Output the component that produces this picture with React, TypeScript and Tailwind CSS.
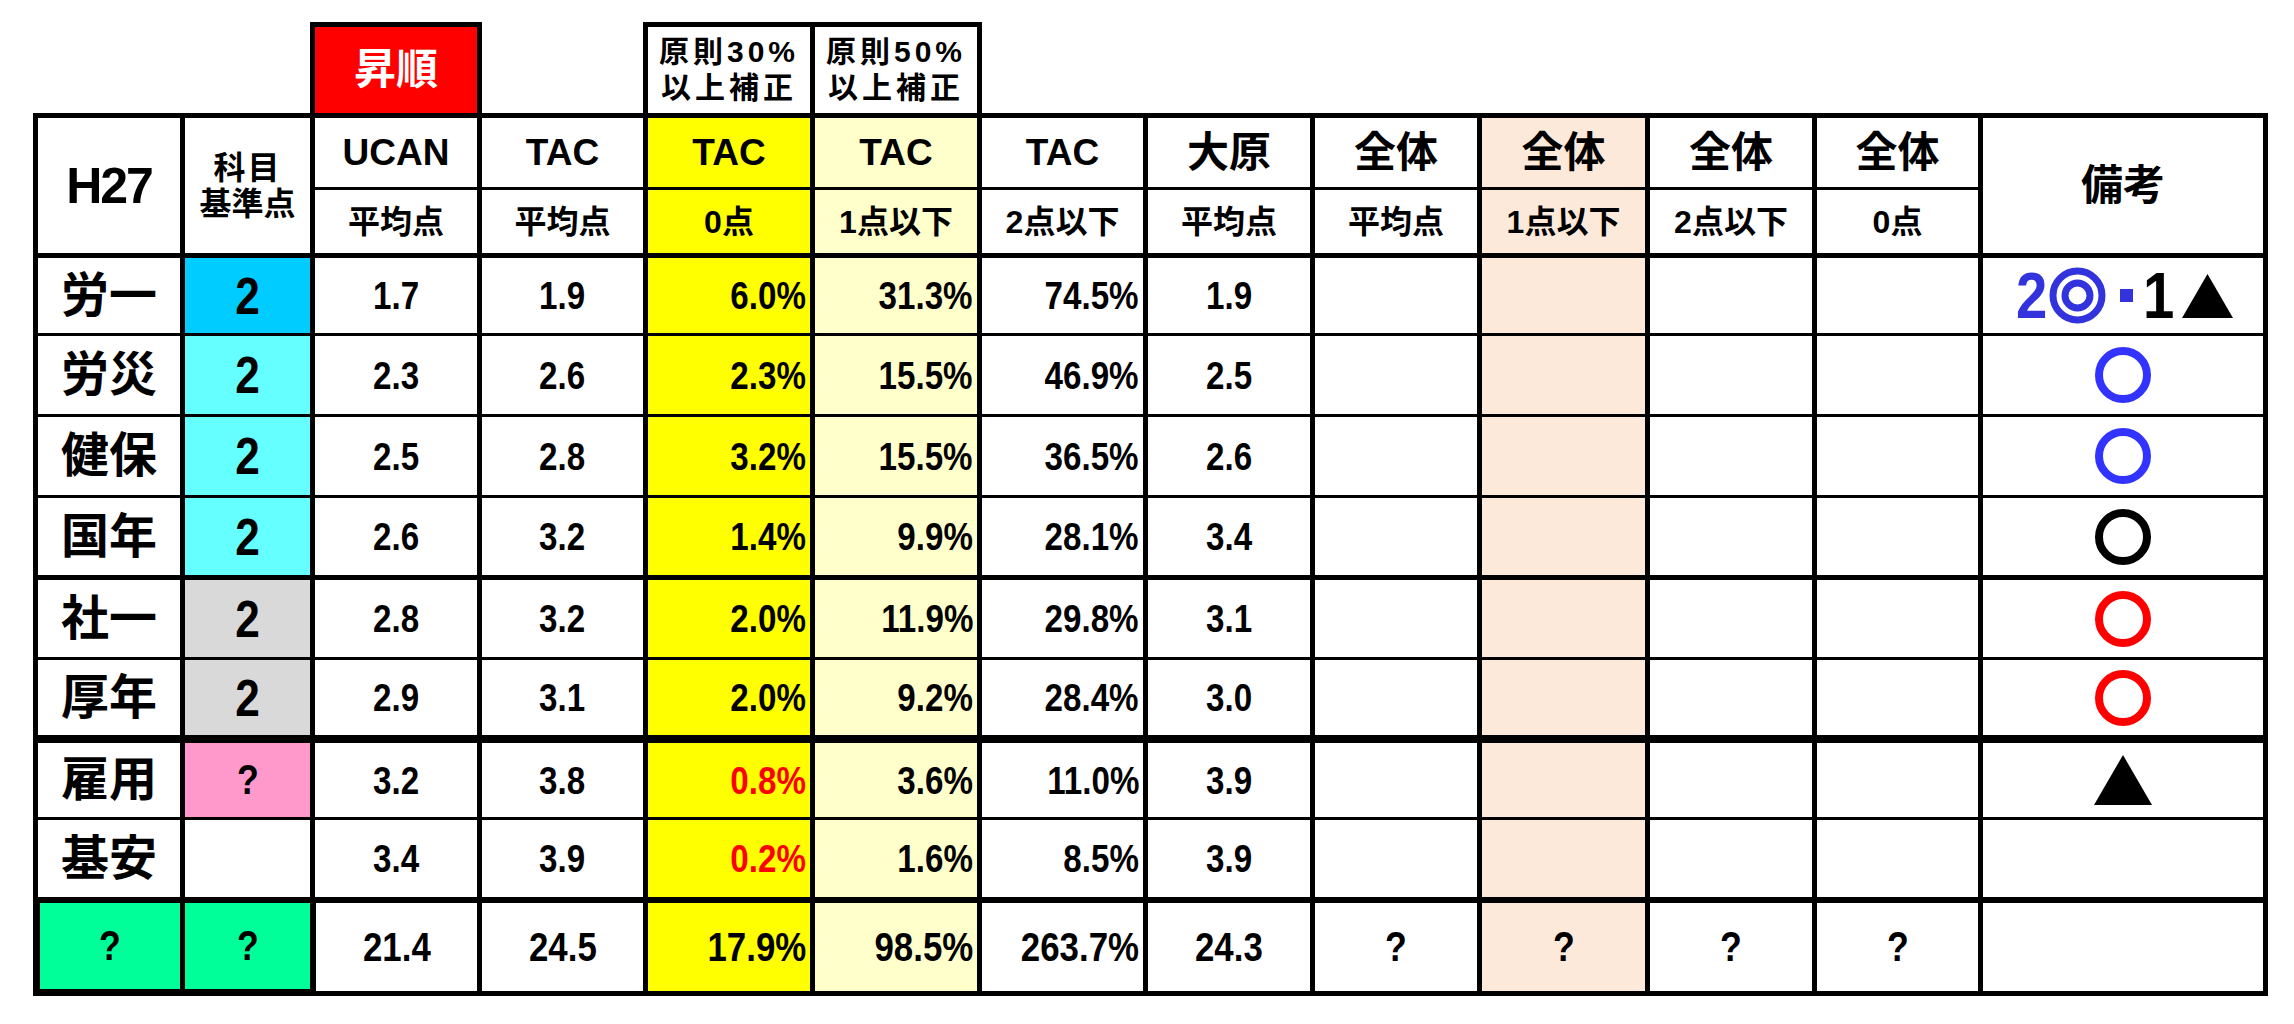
import React from "react";

type Row = {
  label: string;
  base: string;
  baseBg: string;
  ucan: string;
  tac: string;
  z: string;
  zr: boolean;
  o: string;
  t: string;
  oh: string;
  mark: string;
  top: string;
};

const rows: Row[] = [
  { label: "労一", base: "2", baseBg: "bg-[#00ccff]", ucan: "1.7", tac: "1.9", z: "6.0%", zr: false, o: "31.3%", t: "74.5%", oh: "1.9", mark: "combo", top: "border-t-[5px]" },
  { label: "労災", base: "2", baseBg: "bg-[#66ffff]", ucan: "2.3", tac: "2.6", z: "2.3%", zr: false, o: "15.5%", t: "46.9%", oh: "2.5", mark: "blue", top: "border-t-[3px]" },
  { label: "健保", base: "2", baseBg: "bg-[#66ffff]", ucan: "2.5", tac: "2.8", z: "3.2%", zr: false, o: "15.5%", t: "36.5%", oh: "2.6", mark: "blue", top: "border-t-[3px]" },
  { label: "国年", base: "2", baseBg: "bg-[#66ffff]", ucan: "2.6", tac: "3.2", z: "1.4%", zr: false, o: "9.9%", t: "28.1%", oh: "3.4", mark: "black", top: "border-t-[3px]" },
  { label: "社一", base: "2", baseBg: "bg-[#d9d9d9]", ucan: "2.8", tac: "3.2", z: "2.0%", zr: false, o: "11.9%", t: "29.8%", oh: "3.1", mark: "red", top: "border-t-[5px]" },
  { label: "厚年", base: "2", baseBg: "bg-[#d9d9d9]", ucan: "2.9", tac: "3.1", z: "2.0%", zr: false, o: "9.2%", t: "28.4%", oh: "3.0", mark: "red", top: "border-t-[3px]" },
  { label: "雇用", base: "?", baseBg: "bg-[#ff99cc]", ucan: "3.2", tac: "3.8", z: "0.8%", zr: true, o: "3.6%", t: "11.0%", oh: "3.9", mark: "tri", top: "border-t-[8px]" },
  { label: "基安", base: "", baseBg: "bg-white", ucan: "3.4", tac: "3.9", z: "0.2%", zr: true, o: "1.6%", t: "8.5%", oh: "3.9", mark: "", top: "border-t-[3px]" },
];

function C({ top, className = "", children }: { top: string; className?: string; children?: React.ReactNode }) {
  return (
    <div className={`flex items-center border-l-[5px] border-black leading-none ${top} ${className}`}>
      {children}
    </div>
  );
}

function N({ children, right = false }: { children?: React.ReactNode; right?: boolean }) {
  return (
    <span className={`inline-block scale-x-[0.85] ${right ? "origin-right" : "origin-center"}`}>{children}</span>
  );
}

function Ring({ color }: { color: string }) {
  return (
    <svg width="56" height="56" viewBox="0 0 56 56">
      <circle cx="28" cy="28" r="24" fill="none" stroke={color} strokeWidth="8" />
    </svg>
  );
}

function Mark({ kind }: { kind: string }) {
  if (kind === "combo") {
    return (
      <div className="flex items-center">
        <span className="inline-block w-[32px] scale-x-[0.88] text-center text-[64px] leading-none text-[#3333dd]">2</span>
        <svg className="ml-[3px]" width="57" height="57" viewBox="0 0 57 57">
          <circle cx="28.5" cy="28.5" r="24.5" fill="none" stroke="#3333dd" strokeWidth="7" />
          <circle cx="28.5" cy="28.5" r="12.5" fill="none" stroke="#3333dd" strokeWidth="7" />
        </svg>
        <span className="ml-[14px] h-[13px] w-[13px] bg-[#3333dd]" />
        <span className="ml-[8px] inline-block w-[32px] scale-x-[0.88] text-center text-[64px] leading-none text-black">1</span>
        <svg className="ml-[9px]" width="51" height="44" viewBox="0 0 51 44">
          <polygon points="25.5,0 51,44 0,44" fill="#000" />
        </svg>
      </div>
    );
  }
  if (kind === "blue") return <Ring color="#3333ff" />;
  if (kind === "black") return <Ring color="#000000" />;
  if (kind === "red") return <Ring color="#ff0000" />;
  if (kind === "tri") {
    return (
      <svg width="58" height="50" viewBox="0 0 58 50">
        <polygon points="29,0 58,50 0,50" fill="#000" />
      </svg>
    );
  }
  return null;
}

const num = "justify-center text-[39px]";
const pct = "justify-end pr-[4px] text-[39px]";
const tnum = "justify-center border-b-[5px] text-[41px]";
const tpct = "justify-end border-b-[5px] pr-[4px] text-[41px]";
const h1 = "border-t-[5px]";
const h2 = "border-t-[3px]";

export default function App() {
  return (
    <div className="min-h-[1024px] w-[2294px] bg-white pl-[33px] pt-[22px] font-['Liberation_Sans','Noto_Sans_CJK_JP',sans-serif] font-bold text-black">
      <div className="grid grid-cols-[147px_130px_167px_166px_167px_167px_166px_167px_167px_168px_167px_166px_290px] grid-rows-[91px_74px_66px_80px_81px_81px_80px_82px_78px_82px_80px_99px]">
        {/* row 0: boxes above the table */}
        <div />
        <div />
        <div className="flex items-center justify-center border-l-[5px] border-t-[5px] border-black bg-[#ff0000] text-[42px] leading-none text-white">
          昇順
        </div>
        <div className="border-l-[5px] border-black" />
        <div className="flex flex-col items-center justify-center border-l-[5px] border-t-[5px] border-black bg-white text-[30px] leading-[36px] tracking-[4px]">
          <span>原則30%</span>
          <span>以上補正</span>
        </div>
        <div className="flex flex-col items-center justify-center border-l-[5px] border-t-[5px] border-black bg-white text-[30px] leading-[36px] tracking-[4px]">
          <span>原則50%</span>
          <span>以上補正</span>
        </div>
        <div className="border-l-[5px] border-black" />
        <div />
        <div />
        <div />
        <div />
        <div />
        <div />

        {/* header row 1 */}
        <C top={h1} className="row-span-2 justify-center text-[50px] tracking-[-2px]">H27</C>
        <C top={h1} className="row-span-2 flex-col justify-center text-[32px]">
          <span className="leading-[36px] tracking-[2px]">科目</span>
          <span className="leading-[36px]">基準点</span>
        </C>
        <C top={h1} className="justify-center text-[37px]">UCAN</C>
        <C top={h1} className="justify-center text-[37px]">TAC</C>
        <C top={h1} className="justify-center bg-[#ffff00] text-[37px]">TAC</C>
        <C top={h1} className="justify-center bg-[#ffffcc] text-[37px]">TAC</C>
        <C top={h1} className="justify-center text-[37px]">TAC</C>
        <C top={h1} className="justify-center text-[42px]">大原</C>
        <C top={h1} className="justify-center text-[42px]">全体</C>
        <C top={h1} className="justify-center bg-[#fde9d9] text-[42px]">全体</C>
        <C top={h1} className="justify-center text-[42px]">全体</C>
        <C top={h1} className="justify-center text-[42px]">全体</C>
        <C top={h1} className="row-span-2 justify-center border-r-[5px] text-[42px]">備考</C>

        {/* header row 2 */}
        <C top={h2} className="justify-center text-[32px]">平均点</C>
        <C top={h2} className="justify-center text-[32px]">平均点</C>
        <C top={h2} className="justify-center bg-[#ffff00] text-[32px]">0点</C>
        <C top={h2} className="justify-center bg-[#ffffcc] text-[32px]">1点以下</C>
        <C top={h2} className="justify-center text-[32px]">2点以下</C>
        <C top={h2} className="justify-center text-[32px]">平均点</C>
        <C top={h2} className="justify-center text-[32px]">平均点</C>
        <C top={h2} className="justify-center bg-[#fde9d9] text-[32px]">1点以下</C>
        <C top={h2} className="justify-center text-[32px]">2点以下</C>
        <C top={h2} className="justify-center text-[32px]">0点</C>

        {/* data rows */}
        {rows.map((r) => (
          <React.Fragment key={r.label}>
            <C top={r.top} className="justify-center text-[48px]">{r.label}</C>
            <C top={r.top} className={`justify-center ${r.baseBg} ${r.base === "?" ? "text-[42px]" : "text-[52px]"}`}>
              <N>{r.base}</N>
            </C>
            <C top={r.top} className={num}><N>{r.ucan}</N></C>
            <C top={r.top} className={num}><N>{r.tac}</N></C>
            <C top={r.top} className={`${pct} bg-[#ffff00] ${r.zr ? "text-[#ff0000]" : ""}`}><N right>{r.z}</N></C>
            <C top={r.top} className={`${pct} bg-[#ffffcc]`}><N right>{r.o}</N></C>
            <C top={r.top} className={pct}><N right>{r.t}</N></C>
            <C top={r.top} className={num}><N>{r.oh}</N></C>
            <C top={r.top} />
            <C top={r.top} className="bg-[#fde9d9]" />
            <C top={r.top} />
            <C top={r.top} />
            <C top={r.top} className="justify-center border-r-[5px]">
              <Mark kind={r.mark} />
            </C>
          </React.Fragment>
        ))}

        {/* total row */}
        <C top="border-t-[6px]" className="justify-center border-b-[7px] border-l-[7px] bg-[#00ff99] text-[42px]"><N>?</N></C>
        <C top="border-t-[6px]" className="justify-center border-b-[7px] bg-[#00ff99] text-[42px]"><N>?</N></C>
        <C top="border-t-[6px]" className={`${tnum} border-l-[6px]`}><N>21.4</N></C>
        <C top="border-t-[6px]" className={tnum}><N>24.5</N></C>
        <C top="border-t-[6px]" className={`${tpct} bg-[#ffff00]`}><N right>17.9%</N></C>
        <C top="border-t-[6px]" className={`${tpct} bg-[#ffffcc]`}><N right>98.5%</N></C>
        <C top="border-t-[6px]" className={tpct}><N right>263.7%</N></C>
        <C top="border-t-[6px]" className={tnum}><N>24.3</N></C>
        <C top="border-t-[6px]" className="justify-center border-b-[5px] text-[42px]"><N>?</N></C>
        <C top="border-t-[6px]" className="justify-center border-b-[5px] bg-[#fde9d9] text-[42px]"><N>?</N></C>
        <C top="border-t-[6px]" className="justify-center border-b-[5px] text-[42px]"><N>?</N></C>
        <C top="border-t-[6px]" className="justify-center border-b-[5px] text-[42px]"><N>?</N></C>
        <C top="border-t-[6px]" className="border-b-[5px] border-r-[5px]" />
      </div>
    </div>
  );
}
